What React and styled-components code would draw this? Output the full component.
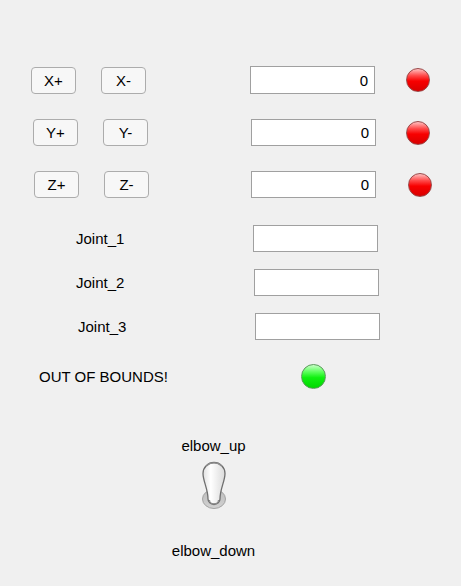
import React from "react";
import styled, { createGlobalStyle } from "styled-components";

const GlobalStyle = createGlobalStyle`
  html, body { margin: 0; padding: 0; background: #f0f0f0; }
  body { font-family: "Liberation Sans", Arial, sans-serif; color: #000; }
`;

const Page = styled.div`
  width: 461px;
  height: 586px;
  box-sizing: border-box;
  background: #f0f0f0;
  padding-top: 66px;
  display: flex;
  flex-direction: column;
  font-size: 15px;
  overflow: hidden;
`;

const Row = styled.div`
  display: flex;
  align-items: center;
  height: ${(p) => p.$h || 27}px;
  padding-left: ${(p) => p.$pl || 0}px;
  margin-top: ${(p) => p.$mt || 0}px;
`;

const JogButton = styled.button`
  box-sizing: border-box;
  width: 45px;
  height: 27px;
  margin-left: ${(p) => p.$ml || 0}px;
  padding: 0;
  border: 1px solid #acacac;
  border-radius: 4px;
  background: #f7f7f7;
  font-family: "Liberation Sans", Arial, sans-serif;
  font-size: 15px;
  color: #000;
`;

const Field = styled.div`
  box-sizing: border-box;
  width: 125px;
  height: ${(p) => p.$h || 27}px;
  margin-left: ${(p) => p.$ml || 0}px;
  border: 1px solid #a0a0a0;
  background: #fff;
  display: flex;
  align-items: center;
  justify-content: flex-end;
  padding-right: 6px;
  font-size: 15px;
`;

const Lamp = styled.div`
  box-sizing: border-box;
  width: ${(p) => p.$size || 24}px;
  height: ${(p) => p.$size || 24}px;
  margin-left: ${(p) => p.$ml || 0}px;
  border-radius: 50%;
  border: 1px solid ${(p) => (p.$on ? "#5a9a5a" : "#9a4a4a")};
  background: ${(p) =>
    p.$on
      ? "linear-gradient(to bottom, #c8ffc8 0%, #5cff5c 30%, #10f010 55%, #00d800 100%)"
      : "linear-gradient(to bottom, #ffc0c0 0%, #ff4a4a 30%, #f80000 55%, #d80000 100%)"};
`;

const Label = styled.span`
  display: inline-block;
  width: ${(p) => p.$w || "auto"}px;
  font-size: 15px;
  white-space: nowrap;
`;

const SwitchBlock = styled.div`
  display: flex;
  flex-direction: column;
  align-items: center;
  width: 121px;
  margin-left: 153px;
  margin-top: 48px;
`;

const SwitchLabel = styled.div`
  font-size: 15px;
  line-height: 17px;
  margin-top: ${(p) => p.$mt || 0}px;
`;

const ToggleWrap = styled.div`
  width: 26px;
  height: 49px;
  margin-top: 7px;
`;

function Toggle() {
  return (
    <ToggleWrap>
      <svg width="26" height="49" viewBox="0 0 26 49">
        <defs>
          <linearGradient id="pad" x1="0" y1="0" x2="1" y2="0">
            <stop offset="0" stopColor="#e0e0e0" />
            <stop offset="0.35" stopColor="#ffffff" />
            <stop offset="1" stopColor="#dadada" />
          </linearGradient>
          <linearGradient id="base" x1="0" y1="0" x2="0" y2="1">
            <stop offset="0" stopColor="#bbbbbb" />
            <stop offset="1" stopColor="#d2d2d2" />
          </linearGradient>
        </defs>
        <ellipse cx="13" cy="38" rx="11.5" ry="9.5" fill="url(#base)" stroke="#a3a3a3" strokeWidth="1" />
        <path
          d="M2,12.5 A11,11 0 0 1 24,12.5 C24,20 19,28 19,38 A6,5.5 0 0 1 7,38 C7,28 2,20 2,12.5 Z"
          fill="url(#pad)"
          stroke="#6e6e6e"
          strokeWidth="1.3"
        />
        <path d="M5.5,5 A9.5,8 0 0 1 20.5,5" fill="none" stroke="#8e8e8e" strokeWidth="1.2" />
        <path d="M8.5,39 A4.5,3.8 0 0 0 17.5,39" fill="none" stroke="#8a8a8a" strokeWidth="1.2" />
      </svg>
    </ToggleWrap>
  );
}

export default function App() {
  return (
    <>
      <GlobalStyle />
      <Page>
        <Row $h={28} $pl={31}>
          <JogButton>X+</JogButton>
          <JogButton $ml={25}>X-</JogButton>
          <Field $ml={104} $h={28}>0</Field>
          <Lamp $ml={31} />
        </Row>
        <Row $pl={33} $mt={25}>
          <JogButton>Y+</JogButton>
          <JogButton $ml={25}>Y-</JogButton>
          <Field $ml={103}>0</Field>
          <Lamp $ml={30} />
        </Row>
        <Row $pl={34} $mt={25}>
          <JogButton>Z+</JogButton>
          <JogButton $ml={25}>Z-</JogButton>
          <Field $ml={102}>0</Field>
          <Lamp $ml={32} />
        </Row>

        <Row $pl={76} $mt={27}>
          <Label $w={177}>Joint_1</Label>
          <Field />
        </Row>
        <Row $pl={76} $mt={17}>
          <Label $w={178}>Joint_2</Label>
          <Field />
        </Row>
        <Row $pl={78} $mt={17}>
          <Label $w={177}>Joint_3</Label>
          <Field />
        </Row>

        <Row $h={25} $pl={39} $mt={24}>
          <Label $w={262}>OUT OF BOUNDS!</Label>
          <Lamp $on $size={25} />
        </Row>

        <SwitchBlock>
          <SwitchLabel>elbow_up</SwitchLabel>
          <Toggle />
          <SwitchLabel $mt={32}>elbow_down</SwitchLabel>
        </SwitchBlock>
      </Page>
    </>
  );
}
